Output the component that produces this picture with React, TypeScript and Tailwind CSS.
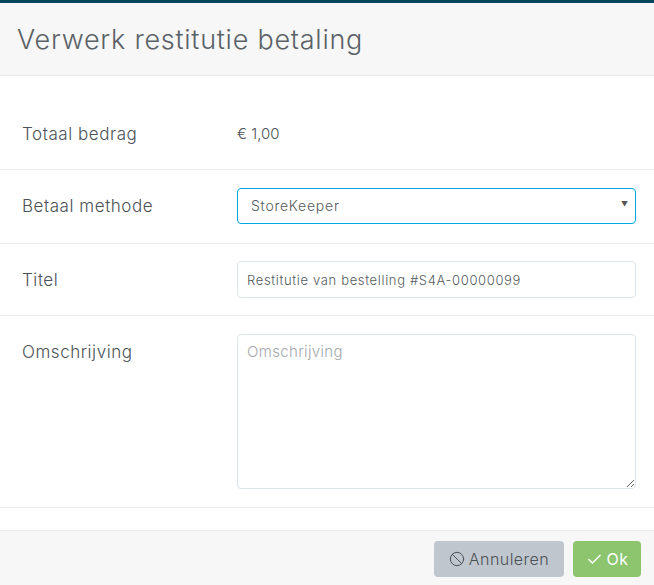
import { Ban, Check } from 'lucide-react';

const labelClass = 'w-[215px] shrink-0 text-[17px] font-light tracking-[0.55px] text-[#4b5257]';

const App = () => {
  return (
    <div className="h-[585px] w-[654px] flex flex-col bg-white font-['Inter','Noto_Sans',sans-serif] overflow-hidden">
      <div className="h-[3px] shrink-0 bg-[#00465f]" />

      {/* Header */}
      <div className="h-[73px] shrink-0 flex items-center pl-[17px] pt-[2px] bg-[#f7f7f7] border-b border-[#e9e9e9]">
        <h1 className="text-[27px] font-light tracking-[0.75px] text-[#5a6268]">Verwerk restitutie betaling</h1>
      </div>

      {/* Form rows */}
      <div className="h-[94px] shrink-0 flex items-center pl-[22px] pt-[24px] border-b border-[#e9ecef]">
        <div className={labelClass}>Totaal bedrag</div>
        <div className="text-[15px] font-light text-[#4b5257]">€ 1,00</div>
      </div>

      <div className="h-[74px] shrink-0 flex items-center pl-[22px] pr-[18px] border-b border-[#e9ecef]">
        <div className={labelClass}>Betaal methode</div>
        <div className="relative flex-1 mb-[2px]">
          <select
            defaultValue="StoreKeeper"
            className="block w-full h-[36px] pl-[13px] pr-6 appearance-none rounded-[4px] border border-[#00a7e1] bg-white text-[14px] font-light tracking-[0.75px] text-[#555b60] outline-none"
          >
            <option>StoreKeeper</option>
          </select>
          <span className="absolute right-[8px] top-[11px] text-[7px] leading-[12px] text-[#555]">▼</span>
        </div>
      </div>

      <div className="h-[72px] shrink-0 flex items-center pl-[22px] pr-[18px] border-b border-[#e9ecef]">
        <div className={`${labelClass} pt-[2px]`}>Titel</div>
        <input
          readOnly
          value="Restitutie van bestelling #S4A-00000099"
          className="flex-1 h-[37px] px-[9px] rounded-[4px] border border-[#dde3ea] text-[13px] font-light tracking-[0.65px] text-[#555b60] outline-none"
        />
      </div>

      <div className="h-[192px] shrink-0 flex items-start pl-[22px] pr-[18px] pt-[18px] border-b border-[#e9ecef]">
        <div className={`${labelClass} leading-[36px]`}>Omschrijving</div>
        <textarea
          placeholder="Omschrijving"
          className="flex-1 h-[155px] px-[9px] py-[6px] rounded-[4px] border border-[#dde3ea] text-[15px] font-light tracking-[0.35px] text-[#555b60] placeholder:text-[#a3a8ac] outline-none"
        />
      </div>

      <div className="h-[22px] shrink-0" />

      {/* Footer */}
      <div className="flex-1 flex items-center justify-end gap-[9px] pr-[13px] pt-[2px] bg-[#f7f7f7] border-t border-[#e9e9e9]">
        <button className="h-[36px] w-[130px] flex items-center justify-center gap-[4px] rounded-[4px] bg-[#c0c6cd] text-[16px] font-light tracking-[0.45px] text-[#4b5257]">
          <Ban size={16} strokeWidth={1.5} />
          Annuleren
        </button>
        <button className="h-[36px] w-[68px] flex items-center justify-center gap-[4px] rounded-[4px] bg-[#8cc56e] text-[16px] font-normal tracking-[0.4px] text-white">
          <Check size={17} strokeWidth={2} />
          Ok
        </button>
      </div>
    </div>
  );
};

export default App;
